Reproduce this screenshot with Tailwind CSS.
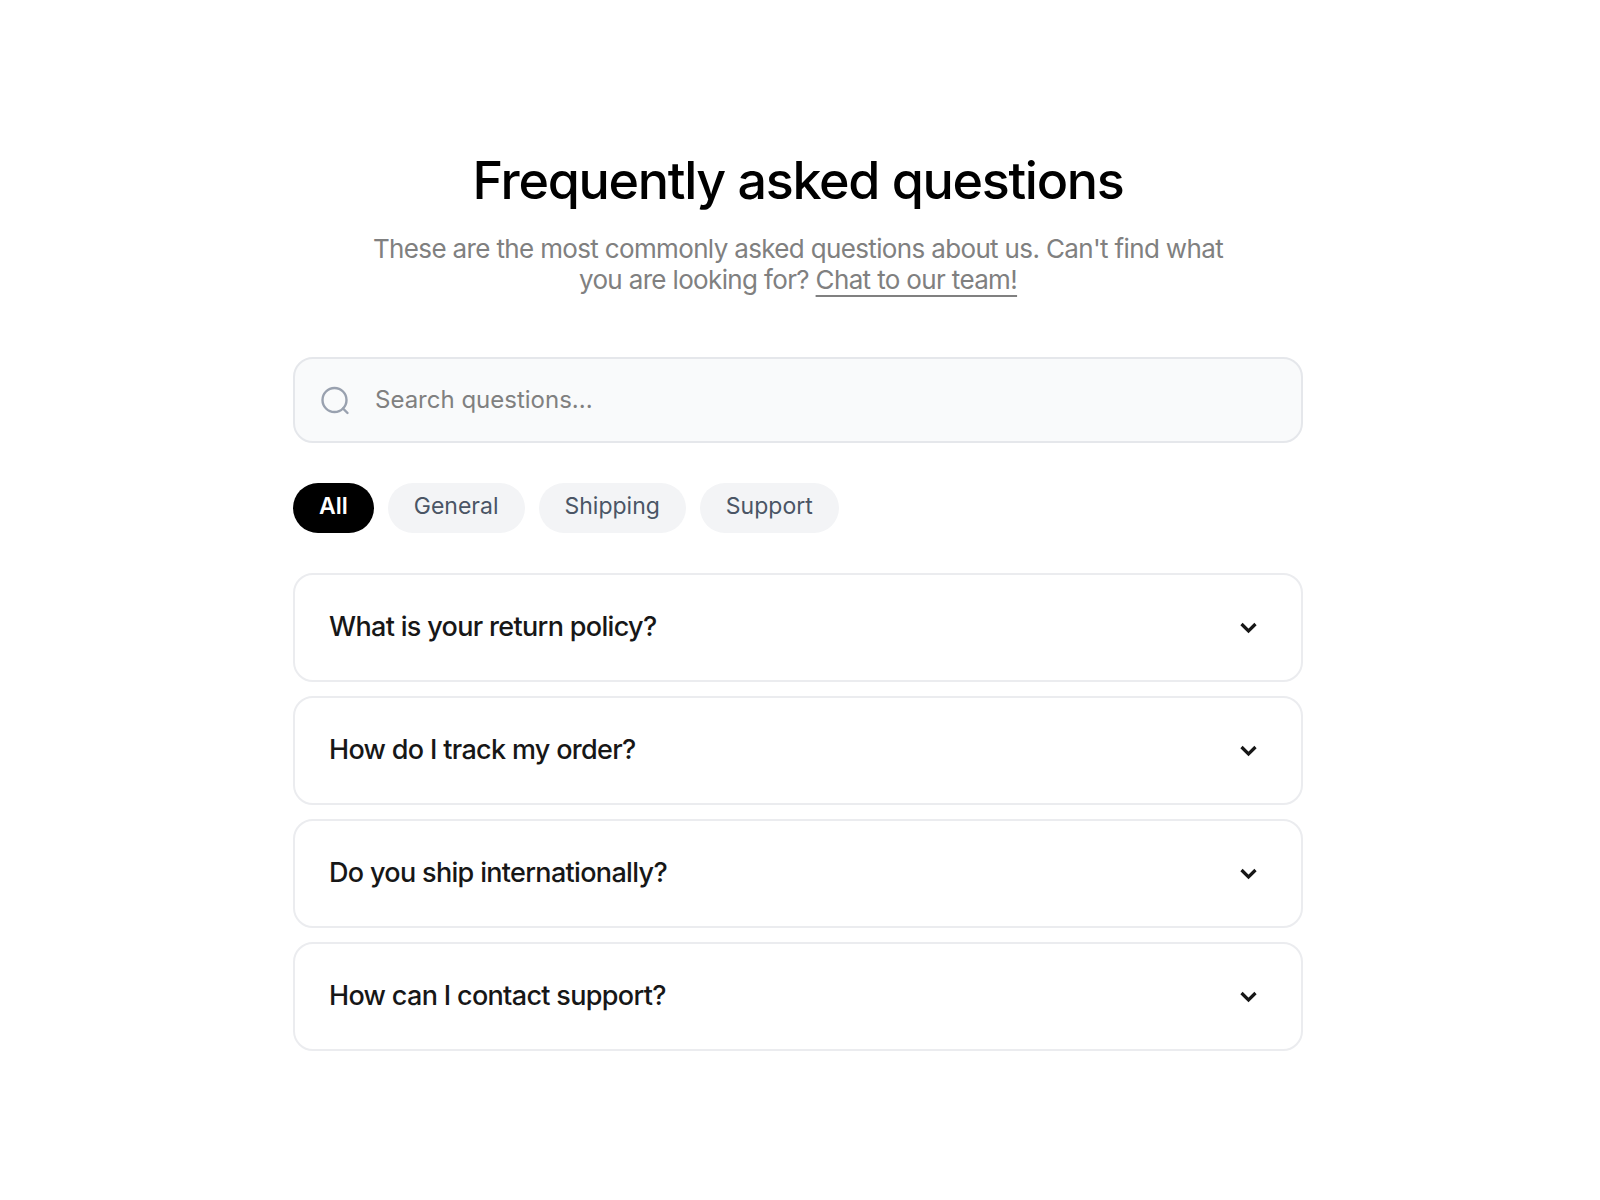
<!DOCTYPE html>
<html lang="en">
<head>
    <meta charset="UTF-8">
    <meta name="viewport" content="width=device-width, initial-scale=1.0">
    <title>Frequently asked questions</title>
    <script src="https://cdn.jsdelivr.net/npm/@tailwindcss/browser@4"></script>
</head>
<body class="bg-white pr-1 font-['Inter',sans-serif] text-black">
    <main class="max-w-[1058px] mx-auto px-6 pt-[145px] pb-36">
        <!-- Heading -->
        <header class="text-center max-w-[880px] mx-auto">
            <h1 class="text-[52px] leading-[72px] font-medium tracking-tight">Frequently asked questions</h1>
            <p class="mt-4 text-[26px] leading-[31px] tracking-tight text-[#808080]">These are the most commonly asked questions about us. Can't find what you are looking for? <a href="#" class="underline decoration-2 underline-offset-[6px]">Chat to our team!</a></p>
        </header>

        <!-- Search -->
        <div class="mt-[62px] h-[86px] flex items-center gap-6 px-6 bg-gray-50 border-2 border-gray-200 rounded-[20px]">
            <label for="search" aria-label="Search questions" class="shrink-0">
                <svg class="w-8 h-8 text-gray-400" viewBox="0 0 32 32" fill="none" stroke="currentColor" stroke-width="2.4" stroke-linecap="round">
                    <circle cx="15.5" cy="16" r="12"/>
                    <path d="M24 24.500l4.500 4.500"/>
                </svg>
            </label>
            <input type="text" id="search" placeholder="Search questions..." class="flex-1 min-w-0 bg-transparent text-[24px] leading-8 outline-none placeholder:text-[#808080]">
        </div>

        <!-- Category filter -->
        <div class="mt-10 flex flex-wrap gap-[14px]">
            <button type="button" class="h-[50px] px-[26px] pb-1 rounded-full bg-black text-white text-[23px] font-semibold">All</button>
            <button type="button" class="h-[50px] px-[26px] pb-1 rounded-full bg-gray-100 text-gray-600 text-[23px]">General</button>
            <button type="button" class="h-[50px] px-[26px] pb-1 rounded-full bg-gray-100 text-gray-600 text-[23px]">Shipping</button>
            <button type="button" class="h-[50px] px-[26px] pb-1 rounded-full bg-gray-100 text-gray-600 text-[23px]">Support</button>
        </div>

        <!-- Questions -->
        <div class="mt-10 flex flex-col gap-[14px]">
            <button type="button" class="h-[109px] px-[34px] flex items-center justify-between border-2 border-[#ebecef] rounded-[20px] text-[27px] font-medium tracking-tight text-left text-neutral-900">
                What is your return policy?
                <svg class="w-9 h-9" viewBox="0 0 36 36" fill="none" stroke="currentColor" stroke-width="3.2"><path d="M10.500 14l7 7 7-7"/></svg>
            </button>
            <button type="button" class="h-[109px] px-[34px] flex items-center justify-between border-2 border-[#ebecef] rounded-[20px] text-[27px] font-medium tracking-tight text-left text-neutral-900">
                How do I track my order?
                <svg class="w-9 h-9" viewBox="0 0 36 36" fill="none" stroke="currentColor" stroke-width="3.2"><path d="M10.500 14l7 7 7-7"/></svg>
            </button>
            <button type="button" class="h-[109px] px-[34px] flex items-center justify-between border-2 border-[#ebecef] rounded-[20px] text-[27px] font-medium tracking-tight text-left text-neutral-900">
                Do you ship internationally?
                <svg class="w-9 h-9" viewBox="0 0 36 36" fill="none" stroke="currentColor" stroke-width="3.2"><path d="M10.500 14l7 7 7-7"/></svg>
            </button>
            <button type="button" class="h-[109px] px-[34px] flex items-center justify-between border-2 border-[#ebecef] rounded-[20px] text-[27px] font-medium tracking-tight text-left text-neutral-900">
                How can I contact support?
                <svg class="w-9 h-9" viewBox="0 0 36 36" fill="none" stroke="currentColor" stroke-width="3.2"><path d="M10.500 14l7 7 7-7"/></svg>
            </button>
        </div>
    </main>
</body>
</html>
